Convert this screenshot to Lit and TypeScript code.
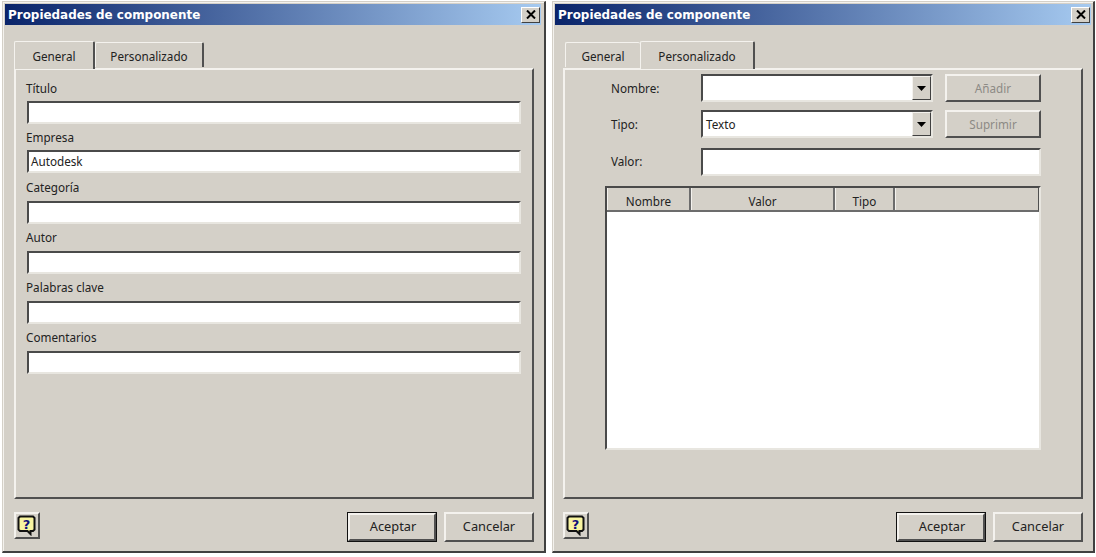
import { LitElement, html, css } from "lit";
import { customElement } from "lit/decorators.js";

const helpIcon = html`<svg class="help-ic" width="20" height="21" viewBox="0 0 20 21">
  <path d="M3 1.5H16L17.5 3V14.5L16 16H13.5V19L10.5 16H3L1.5 14.5V3Z" fill="#f8f4a0" stroke="#111" stroke-width="2"/>
  <text x="9.5" y="14" text-anchor="middle" class="q">?</text>
</svg>`;

const arrow = html`<svg width="9" height="5" viewBox="0 0 9 5"><path d="M0 0H9L4.5 5Z" fill="#000"/></svg>`;

@customElement("app-root")
export class AppRoot extends LitElement {
  static styles = css`
    :host { display: block; width: 1096px; height: 557px; background: #fff; overflow: hidden;
      font-family: "Noto Sans", "Open Sans", sans-serif; font-size: 11.7px; color: #222; }
    * { box-sizing: border-box; }
    .desk { display: flex; padding: 1px 0 0 2px; gap: 6px; }
    .dlg { width: 544px; height: 552px; background: #d4d0c8; padding: 2px 3px 0 2px;
      border: 1px solid #d4d0c8; border-right: 2px solid #404040; border-bottom: 2px solid #404040;
      box-shadow: inset 1px 1px 0 #f4f2ee; display: flex; flex-direction: column; }
    .d2 { width: 543px; padding-right: 2px; }
    .title { height: 21px; flex: none; display: flex; align-items: center; justify-content: space-between;
      background: linear-gradient(90deg, #0a246a, #a6caf0); padding: 0 1px 0 3px; color: #fff;
      font: bold 11.95px "DejaVu Sans", sans-serif; }
    .close { width: 19px; height: 16px; background: #d4d0c8; display: flex; align-items: center; justify-content: center;
      border: 1px solid; border-color: #fff #404040 #404040 #fff; }
    .body { flex: 1; display: flex; flex-direction: column; padding: 15px 0 0 9px; }
    .d2 .body { padding-left: 8px; }
    .tabs { display: flex; align-items: flex-end; height: 28px; position: relative; z-index: 1; }
    .d2 .tabs { padding-left: 2px; }
    .tab { height: 25px; display: flex; align-items: center; justify-content: center; margin-bottom: 1px; padding-top: 2px;
      border: 1px solid #f4f2ee; border-bottom: none; border-right: 2px solid #505050; border-radius: 2px 2px 0 0; }
    .tab.on { height: 28px; margin-bottom: -1px; background: #d4d0c8; padding-top: 1px; }
    .g1 { width: 81px; } .p1 { width: 109px; }
    .d2 .g1 { width: 75px; border-right: none; } .d2 .p1 { width: 115px; }
    .panel { width: 520px; height: 431px; border: 2px solid; border-color: #f4f2ee #505050 #505050 #f4f2ee; flex: none; }
    .gen { padding: 10px 11px 0 10px; display: flex; flex-direction: column; }
    .gen label { height: 17px; line-height: 15px; display: block; margin-top: 3px; white-space: nowrap; }
    .gen label:nth-of-type(1) { margin-top: 0; line-height: 17px; }
    .gen label:nth-of-type(2) { margin-top: 2px; line-height: 17px; }
    .gen label:nth-of-type(3) { margin-top: 4px; }
    .field { background: #fff; border: 2px solid; border-color: #4a4a4a #e8e6e0 #e8e6e0 #4a4a4a; padding-left: 2px; display: flex; align-items: center; }
    .gen .field { height: 23px; margin: 4px 0 3px 1px; padding-bottom: 2px; }
    .cust { display: grid; grid-template-columns: 90px 232px 12px 96px; padding: 4px 0 0 46px; }
    .cust .lbl { display: flex; align-items: center; }
    .row1 { height: 28px; margin-bottom: 8px; }
    .row2 { height: 28px; margin-bottom: 10px; }
    .row3 { height: 28px; margin-bottom: 10px; }
    .cust .lbl.row3 { padding-bottom: 2px; }
    .cust .field { padding-left: 3px; justify-content: space-between; }
    .arrow { width: 19px; height: 24px; background: #d4d0c8; display: flex; align-items: center; justify-content: center;
      border: 1px solid; border-color: #f4f2ee #404040 #404040 #f4f2ee; }
    .btn { display: flex; align-items: center; justify-content: center; background: #d4d0c8;
      border: 2px solid; border-color: #f4f2ee #505050 #505050 #f4f2ee; }
    .dis { color: #8c8a85; grid-column: 4; }
    .wide { grid-column: 2 / 5; }
    .gap { grid-column: 3; }
    .table { grid-column: 1 / 5; margin-left: -6px; height: 264px; background: #fff; border: 2px solid;
      border-color: #4a4a4a #e8e6e0 #e8e6e0 #4a4a4a; }
    .thead { display: flex; height: 24px; background: #d4d0c8; border-right: 1px solid #505050; border-bottom: 2px solid #6c6c6c; }
    .th { display: flex; align-items: center; justify-content: center; padding-top: 3px; border-left: 1px solid #f4f2ee; border-right: 2px solid #6c6c6c; }
    .th:last-child { border-right: none; flex: 1; }
    .foot { flex: 1; display: flex; align-items: flex-start; padding-top: 13px; width: 520px; font-size: 12.8px; }
    .help { width: 26px; height: 27px; padding: 0; }
    .ok { width: 90px; height: 30px; margin-left: auto; border: 1px solid #111; padding: 0; }
    .ok > div { flex: 1; align-self: stretch; display: flex; align-items: center; justify-content: center; padding: 0 0 3px 2px;
      border: 2px solid; border-color: #f4f2ee #505050 #505050 #f4f2ee; }
    .cancel { width: 90px; height: 30px; margin-left: 7px; padding-bottom: 3px; }
    .q { font: bold 13px "DejaVu Sans", sans-serif; fill: #10107a; }
  `;

  private chrome(cls: string, active: number, content: unknown) {
    return html`<div class="dlg ${cls}">
      <div class="title"><span>Propiedades de componente</span>
        <div class="close"><svg width="10" height="9" viewBox="0 0 10 9"><path d="M1 0.5L9 8.5M9 0.5L1 8.5" stroke="#000" stroke-width="2" fill="none"/></svg></div></div>
      <div class="body">
        <div class="tabs">
          <div class="tab g1 ${active === 0 ? "on" : ""}">General</div>
          <div class="tab p1 ${active === 1 ? "on" : ""}">Personalizado</div>
        </div>
        <div class="panel">${content}</div>
        <div class="foot">
          <div class="btn help">${helpIcon}</div>
          <div class="btn ok"><div>Aceptar</div></div>
          <div class="btn cancel">Cancelar</div>
        </div>
      </div>
    </div>`;
  }

  render() {
    const general = html`<div class="gen">
      ${[["Título", ""], ["Empresa", "Autodesk"], ["Categoría", ""], ["Autor", ""], ["Palabras clave", ""], ["Comentarios", ""]].map(
        ([l, v]) => html`<label>${l}</label><div class="field">${v}</div>`)}
    </div>`;
    const custom = html`<div class="cust">
      <div class="lbl row1">Nombre:</div><div class="field row1"><span></span><div class="arrow">${arrow}</div></div><div class="gap"></div><div class="btn dis row1">Añadir</div>
      <div class="lbl row2">Tipo:</div><div class="field row2"><span>Texto</span><div class="arrow">${arrow}</div></div><div class="gap"></div><div class="btn dis row2">Suprimir</div>
      <div class="lbl row3">Valor:</div><div class="field row3 wide"></div>
      <div class="table"><div class="thead">
        <div class="th" style="width:84px">Nombre</div><div class="th" style="width:144px">Valor</div><div class="th" style="width:60px">Tipo</div><div class="th"></div>
      </div></div>
    </div>`;
    return html`<div class="desk">${this.chrome("d1", 0, general)}${this.chrome("d2", 1, custom)}</div>`;
  }
}
